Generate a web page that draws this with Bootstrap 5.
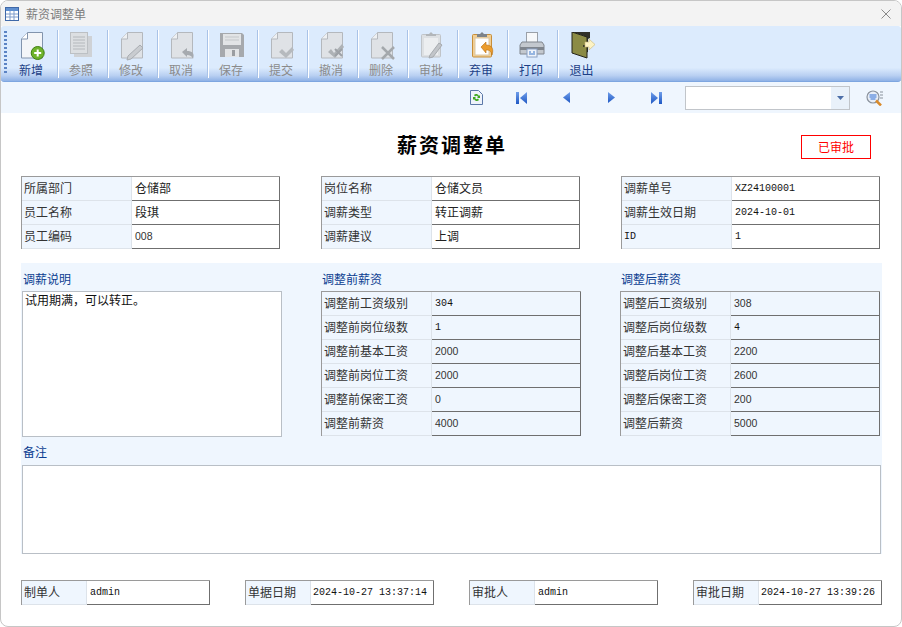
<!DOCTYPE html>
<html lang="zh-CN">
  <head>
    <meta charset="UTF-8" />
    <meta name="viewport" content="width=device-width, initial-scale=1.0" />
    <title>薪资调整单</title>
    <link
      href="https://cdn.jsdelivr.net/npm/bootstrap@5.3.0/dist/css/bootstrap.min.css"
      rel="stylesheet"
    />
    <style>
      html, body { height: 100%; }
      body {
        background: #fff;
        font: 12px/16px "Noto Sans CJK SC", sans-serif;
        color: #333;
        overflow: hidden;
      }
      .win { width: 902px; height: 627px; border: 1px solid #c6c6c6; border-radius: 8px; overflow: hidden; }
      .win-title { height: 25px; background: #f3f3f3; color: #7c7c7c; padding: 0 10px 0 4px; }
      .win-ico { margin-right: 7px; }
      .tool-bar {
        height: 56px;
        background: linear-gradient(#dcebfd 0, #dcebfd 76%, #b9d0f2 90%, #8fb2e6 100%);
        border-radius: 3px;
        border-bottom: 1px solid #7ea6e0;
        padding: 4px 0 3px 2px;
      }
      .grip { width: 3px; margin: 1px 2px 5px 1px; background: repeating-linear-gradient(#5b83c4 0 2px, transparent 2px 4px); }
      .tool-item { width: 50px; color: #1c3f86; border-right: 1px solid #fff; box-shadow: inset -1px 0 0 #a9c3e8; padding: 2px 5px 0 0; }
      .tool-item:last-child { border-right: 0; box-shadow: none; width: 49px; padding-right: 4px; }
      .tool-item.off { color: #8b8b8b; }
      .tool-item svg { width: 32px; height: 30px; flex: none; }
      .nav-strip { height: 31px; background: #eff6fe; padding: 0 18px 0 0; }
      .nav-ico { width: 45px; }
      .nav-ico svg { display: block; margin: 0 auto; }
      .nav-box { width: 165px; height: 24px; border: 1px solid #c1c5ca; background: #fff; margin-left: 6px; margin-right: 16px; }
      .nav-box span { width: 18px; background: #e9f1fa; }
      .sheet { padding: 0 20px; }
      .sheet-head { height: 63px; }
      .sheet-name { left: 0; right: 0; top: 18px; font-size: 20px; line-height: 28px; font-weight: 700; color: #000; letter-spacing: 2px; padding-left: 2px; text-align: center; }
      .stamp { right: 10px; top: 22px; width: 70px; height: 24px; border: 1px solid #f00; color: #f00; padding-bottom: 1px; }
      .col-gap { gap: 41px; }
      .fbox { width: 259px; flex: none; border-top: 1px solid #9a9a9a; border-left: 1px solid #9a9a9a; }
      .frow { height: 24px; }
      .fkey { width: 110px; background: #eff6fe; border-bottom: 1px solid #dde3ea; border-right: 1px solid #dde3ea; padding: 0 0 2px 2px; flex: none; }
      .fval { flex: 1; border-bottom: 1px solid #6f6f6f; border-right: 1px solid #6f6f6f; padding: 0 0 2px 3px; color: #222; }
      .num { font: 10px/16px "Liberation Mono", monospace; color: #111; padding-bottom: 0; }
      .sans { font: 10.5px/16px "Liberation Sans", sans-serif; color: #333; }
      .band { background: #eff6fe; height: 291px; margin-top: 14px; padding: 8px 1px 0 1px; width: 861px; }
      .band-cols { gap: 39px; }
      .band-col { width: 260px; }
      .band-col .fbox { width: 260px; }
      .cap { color: #0b3d91; height: 20px; padding-left: 1px; }
      .memo { border: 1px solid #b9bfc6; background: #fff; padding: 0 2px; color: #111; }
      .memo-a { height: 146px; }
      .memo-b { height: 89px; width: 859px; }
      .cap-b { margin-top: 7px; height: 21px; }
      .foot { margin-top: 26px; gap: 35px; }
      .foot .fbox { width: 189px; }
      .foot .fkey { width: 65px; }
      .date-val { padding-left: 2px; }
    </style>
  </head>
  <body>
    <!-- icon sprites -->
    <svg width="0" height="0" class="position-absolute">
      <defs>
        <linearGradient id="g-nav" x1="0" y1="0" x2="0" y2="1">
          <stop offset="0" stop-color="#6f9eea" />
          <stop offset="1" stop-color="#1f58c4" />
        </linearGradient>
        <symbol id="i-grey" viewBox="0 0 32 30">
          <path d="M12.500.5h15v25.500h-21V7z" fill="#dfe2e6" stroke="#b4b8bd" />
          <path d="M12.500.5V7H6.500" fill="#eef0f2" stroke="#b4b8bd" />
        </symbol>
      </defs>
    </svg>

    <div class="win d-flex flex-column">
      <div class="win-title d-flex align-items-center">
        <svg width="14" height="14" viewBox="0 0 14 14" class="win-ico">
          <rect x=".5" y=".5" width="13" height="13" fill="#fff" stroke="#3f68a8" />
          <rect x="1" y="1" width="12" height="3" fill="#5f8fd0" />
          <path d="M1 7h12M1 10h12M5 4v9M9 4v9" stroke="#7f9ccb" />
        </svg>
        <span>薪资调整单</span>
        <svg width="10" height="10" viewBox="0 0 10 10" class="ms-auto">
          <path d="M.5.500l9 9M9.500.500l-9 9" stroke="#8a8a8a" />
        </svg>
      </div>

      <div class="tool-bar d-flex">
        <div class="grip"></div>
        <div class="tool-item d-flex flex-column align-items-center">
          <svg viewBox="0 0 32 30"><path d="M12.500.5h15v25.500h-21V7z" fill="#f3f5f8" stroke="#8294ad" /><path d="M12.500.5V7H6.500" fill="#fff" stroke="#8294ad" /><circle cx="22.700" cy="21" r="6.500" fill="#6fb32a" stroke="#3f7f12" /><path d="M22.700 17.500v7M19.200 21h7" stroke="#fff" stroke-width="2" /></svg>
          新增
        </div>
        <div class="tool-item off d-flex flex-column align-items-center">
          <svg viewBox="0 0 32 30"><rect x="9" y="4" width="18" height="21" fill="#cfd2d6" /><rect x="5.500" y=".5" width="17" height="21" fill="#dcdfe2" stroke="#bcc0c4" /><path d="M8 5h12M8 8h12M8 11h12M8 14h12M8 17h12" stroke="#b4b8bc" /></svg>
          参照
        </div>
        <div class="tool-item off d-flex flex-column align-items-center">
          <svg viewBox="0 0 32 30"><use href="#i-grey" /><path d="M13 24l12-11 3 3-12 11-4 1z" fill="#c9ccd0" stroke="#a9adb2" /></svg>
          修改
        </div>
        <div class="tool-item off d-flex flex-column align-items-center">
          <svg viewBox="0 0 32 30"><use href="#i-grey" /><path d="M17 20l5-4v3c5 0 8 2 6 8-1-3-3-4-6-4v2z" fill="#a6aaaf" /></svg>
          取消
        </div>
        <div class="tool-item off d-flex flex-column align-items-center">
          <svg viewBox="0 0 32 30"><path d="M5 1h22l2 2v22H5z" fill="#a6a9ad" /><rect x="8" y="2" width="18" height="11" fill="#e2e4e6" /><path d="M10 5h14M10 8h14" stroke="#c4c7ca" /><rect x="10" y="17" width="14" height="8" fill="#e2e4e6" /><rect x="17" y="18" width="3" height="6" fill="#9a9da1" /></svg>
          保存
        </div>
        <div class="tool-item off d-flex flex-column align-items-center">
          <svg viewBox="0 0 32 30"><use href="#i-grey" /><path d="M14 20l3-3 4 4 6-6 2 3-8 8z" fill="#b6babe" /></svg>
          提交
        </div>
        <div class="tool-item off d-flex flex-column align-items-center">
          <svg viewBox="0 0 32 30"><use href="#i-grey" /><path d="M13 20l3-3 3 4 8-9 2 3-9 11z" fill="#aeb2b6" /><path d="M20 17l7 7M27 17l-7 7" stroke="#9da1a6" stroke-width="2" /></svg>
          撤消
        </div>
        <div class="tool-item off d-flex flex-column align-items-center">
          <svg viewBox="0 0 32 30"><use href="#i-grey" /><path d="M17 15l12 12M29 15L17 27" stroke="#a4a8ac" stroke-width="2.500" /></svg>
          删除
        </div>
        <div class="tool-item off d-flex flex-column align-items-center">
          <svg viewBox="0 0 32 30"><rect x="6.500" y="2.500" width="19" height="22.500" rx="1" fill="#dde0e3" stroke="#c0c4c8" /><rect x="9" y="6" width="14" height="17" fill="#eceef0" /><path d="M11 4V2h3l2-2 2 2h3v2z" fill="#b2b6ba" /><path d="M15 23l9-12 3 2-9 12-4 1z" fill="#c2c5c9" stroke="#a6aaae" /></svg>
          审批
        </div>
        <div class="tool-item d-flex flex-column align-items-center">
          <svg viewBox="0 0 32 30"><rect x="7.500" y="2.500" width="19" height="22.500" rx="1" fill="#f2cf94" stroke="#c78e3a" /><rect x="10" y="6" width="14" height="17" fill="#fff" stroke="#d9c7a6" /><path d="M12 5V2h3l2-2 2 2h3v3z" fill="#7d838a" /><path d="M16 15l5-5v3c6 0 8 4 6 10-1-4-2-5-6-5v3z" fill="#eb9c2c" stroke="#b96f10" stroke-width=".6" /></svg>
          弃审
        </div>
        <div class="tool-item d-flex flex-column align-items-center">
          <svg viewBox="0 0 32 30"><rect x="11.500" y=".5" width="11" height="10" fill="#f6f8fa" stroke="#9aa0a8" /><path d="M7 10h20l2 3v9H5v-9z" fill="#c3c8ce" stroke="#80868e" /><rect x="5" y="15" width="24" height="3" fill="#7f858d" /><rect x="12" y="17" width="10" height="8" fill="#eef3fa" stroke="#8aa0c2" /><path d="M14 20h2M18 20h2M14 22h6" stroke="#3c79c8" /></svg>
          打印
        </div>
        <div class="tool-item d-flex flex-column align-items-center">
          <svg viewBox="0 0 32 30"><path d="M6 0h18v6l-2 1v13l-4 1V4z" fill="#2f2f28" /><path d="M6 0l15 5v21L6 21z" fill="#8b8b45" stroke="#24241c" /><circle cx="18" cy="14" r="1" fill="#222" /><path d="M19 10h4V7l6 5.500-6 5.500v-3h-4z" fill="#fdf3c4" stroke="#c9b774" stroke-width=".6" /></svg>
          退出
        </div>
      </div>

      <div class="nav-strip d-flex align-items-center justify-content-end">
        <div class="nav-ico">
          <svg width="13" height="15" viewBox="0 0 13 15"><path d="M.5.500h8l4 4v10H.5z" fill="#eef3fb" stroke="#5b78a8" /><path d="M4 5a3 3 0 0 1 5 1l1-1v3H7l1-1a2 2 0 0 0-3-.500zM9 10a3 3 0 0 1-5-1l-1 1V7h3L5 8a2 2 0 0 0 3 .500z" fill="#3fa81e" /></svg>
        </div>
        <div class="nav-ico">
          <svg width="11" height="12" viewBox="0 0 11 12"><rect width="3" height="12" fill="url(#g-nav)" /><path d="M11 0v12L4 6z" fill="url(#g-nav)" /></svg>
        </div>
        <div class="nav-ico">
          <svg width="7" height="11" viewBox="0 0 7 11"><path d="M7 0v11L0 5.500z" fill="url(#g-nav)" /></svg>
        </div>
        <div class="nav-ico">
          <svg width="7" height="11" viewBox="0 0 7 11"><path d="M0 0v11l7-5.500z" fill="url(#g-nav)" /></svg>
        </div>
        <div class="nav-ico">
          <svg width="11" height="12" viewBox="0 0 11 12"><path d="M0 0v12l7-6z" fill="url(#g-nav)" /><rect x="8" width="3" height="12" fill="url(#g-nav)" /></svg>
        </div>
        <div class="nav-box d-flex justify-content-end">
          <span class="d-flex align-items-center justify-content-center">
            <svg width="7" height="4" viewBox="0 0 7 4"><path d="M0 0h7L3.500 4z" fill="#4c6ea8" /></svg>
          </span>
        </div>
        <svg width="17" height="16" viewBox="0 0 17 16"><circle cx="7" cy="7" r="6" fill="#e8eef7" stroke="#8a929c" stroke-width="1.200" /><path d="M3.500 5h7M3.500 7h7M4.500 9h5" stroke="#2f6fd6" /><path d="M10 10.500l5 5" stroke="#d98a2b" stroke-width="2.500" /><path d="M14 2h3M14 5h3M14 8h3" stroke="#8a929c" /></svg>
      </div>

      <div class="sheet">
        <div class="sheet-head position-relative">
          <div class="sheet-name position-absolute">薪资调整单</div>
          <div class="stamp position-absolute d-flex align-items-center justify-content-center">已审批</div>
        </div>

        <div class="d-flex col-gap">
          <div class="fbox">
            <div class="frow d-flex"><div class="fkey d-flex align-items-center">所属部门</div><div class="fval d-flex align-items-center">仓储部</div></div>
            <div class="frow d-flex"><div class="fkey d-flex align-items-center">员工名称</div><div class="fval d-flex align-items-center">段琪</div></div>
            <div class="frow d-flex"><div class="fkey d-flex align-items-center">员工编码</div><div class="fval d-flex align-items-center sans">008</div></div>
          </div>
          <div class="fbox">
            <div class="frow d-flex"><div class="fkey d-flex align-items-center">岗位名称</div><div class="fval d-flex align-items-center">仓储文员</div></div>
            <div class="frow d-flex"><div class="fkey d-flex align-items-center">调薪类型</div><div class="fval d-flex align-items-center">转正调薪</div></div>
            <div class="frow d-flex"><div class="fkey d-flex align-items-center">调薪建议</div><div class="fval d-flex align-items-center">上调</div></div>
          </div>
          <div class="fbox">
            <div class="frow d-flex"><div class="fkey d-flex align-items-center">调薪单号</div><div class="fval d-flex align-items-center num">XZ24100001</div></div>
            <div class="frow d-flex"><div class="fkey d-flex align-items-center">调薪生效日期</div><div class="fval d-flex align-items-center num">2024-10-01</div></div>
            <div class="frow d-flex"><div class="fkey d-flex align-items-center num">ID</div><div class="fval d-flex align-items-center num">1</div></div>
          </div>
        </div>

        <div class="band">
          <div class="d-flex band-cols">
            <div class="band-col">
              <div class="cap">调薪说明</div>
              <div class="memo memo-a">试用期满，可以转正。</div>
            </div>
            <div class="band-col">
              <div class="cap">调整前薪资</div>
              <div class="fbox">
                <div class="frow d-flex"><div class="fkey d-flex align-items-center">调整前工资级别</div><div class="fval d-flex align-items-center num">304</div></div>
                <div class="frow d-flex"><div class="fkey d-flex align-items-center">调整前岗位级数</div><div class="fval d-flex align-items-center num">1</div></div>
                <div class="frow d-flex"><div class="fkey d-flex align-items-center">调整前基本工资</div><div class="fval d-flex align-items-center sans">2000</div></div>
                <div class="frow d-flex"><div class="fkey d-flex align-items-center">调整前岗位工资</div><div class="fval d-flex align-items-center sans">2000</div></div>
                <div class="frow d-flex"><div class="fkey d-flex align-items-center">调整前保密工资</div><div class="fval d-flex align-items-center sans">0</div></div>
                <div class="frow d-flex"><div class="fkey d-flex align-items-center">调整前薪资</div><div class="fval d-flex align-items-center sans">4000</div></div>
              </div>
            </div>
            <div class="band-col">
              <div class="cap">调整后薪资</div>
              <div class="fbox">
                <div class="frow d-flex"><div class="fkey d-flex align-items-center">调整后工资级别</div><div class="fval d-flex align-items-center sans">308</div></div>
                <div class="frow d-flex"><div class="fkey d-flex align-items-center">调整后岗位级数</div><div class="fval d-flex align-items-center num">4</div></div>
                <div class="frow d-flex"><div class="fkey d-flex align-items-center">调整后基本工资</div><div class="fval d-flex align-items-center sans">2200</div></div>
                <div class="frow d-flex"><div class="fkey d-flex align-items-center">调整后岗位工资</div><div class="fval d-flex align-items-center sans">2600</div></div>
                <div class="frow d-flex"><div class="fkey d-flex align-items-center">调整后保密工资</div><div class="fval d-flex align-items-center sans">200</div></div>
                <div class="frow d-flex"><div class="fkey d-flex align-items-center">调整后薪资</div><div class="fval d-flex align-items-center sans">5000</div></div>
              </div>
            </div>
          </div>
          <div class="cap cap-b">备注</div>
          <div class="memo memo-b"></div>
        </div>

        <div class="d-flex foot">
          <div class="fbox">
            <div class="frow d-flex"><div class="fkey d-flex align-items-center">制单人</div><div class="fval d-flex align-items-center num">admin</div></div>
          </div>
          <div class="fbox">
            <div class="frow d-flex"><div class="fkey d-flex align-items-center">单据日期</div><div class="fval date-val d-flex align-items-center num">2024-10-27 13:37:14</div></div>
          </div>
          <div class="fbox">
            <div class="frow d-flex"><div class="fkey d-flex align-items-center">审批人</div><div class="fval d-flex align-items-center num">admin</div></div>
          </div>
          <div class="fbox">
            <div class="frow d-flex"><div class="fkey d-flex align-items-center">审批日期</div><div class="fval date-val d-flex align-items-center num">2024-10-27 13:39:26</div></div>
          </div>
        </div>
      </div>
    </div>

    <script src="https://cdn.jsdelivr.net/npm/bootstrap@5.3.0/dist/js/bootstrap.bundle.min.js"></script>
  </body>
</html>
